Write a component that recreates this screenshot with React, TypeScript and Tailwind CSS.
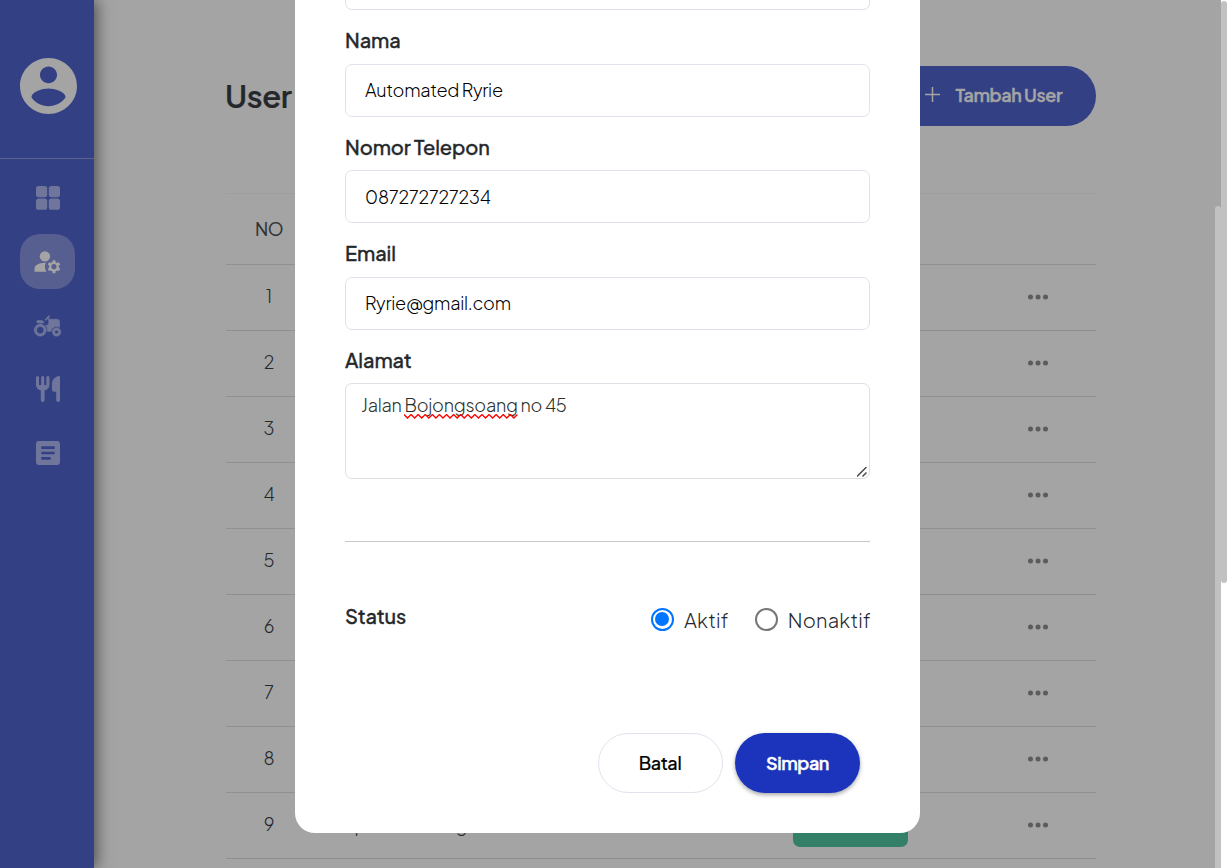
import { MdManageAccounts, MdAgriculture, MdArticle } from "react-icons/md";

const AccountIcon = () => (
  <svg width="57" height="56" viewBox="2 2 20 20" preserveAspectRatio="none" fill="currentColor">
    <path d="M12 2C6.480 2 2 6.480 2 12s4.480 10 10 10 10-4.480 10-10S17.520 2 12 2zm0 3c1.660 0 3 1.340 3 3s-1.340 3-3 3-3-1.340-3-3 1.340-3 3-3zm0 14.200c-2.500 0-4.710-1.280-6-3.220.030-1.990 4-3.080 6-3.080 1.990 0 5.970 1.090 6 3.080-1.290 1.940-3.500 3.220-6 3.220z" />
  </svg>
);

const GridIcon = () => (
  <svg width="24" height="24" viewBox="0 0 24 24" fill="currentColor">
    <rect x="0" y="0" width="11.2" height="11.2" rx="2.6" />
    <rect x="12.8" y="0" width="11.2" height="11.2" rx="2.6" />
    <rect x="0" y="12.6" width="11.2" height="11.2" rx="2.6" />
    <rect x="12.8" y="12.6" width="11.2" height="11.2" rx="2.6" />
  </svg>
);

const CutleryIcon = () => (
  <svg width="24" height="26" viewBox="0 0 24 26" fill="currentColor">
    <path d="M1.5 0A1.5 1.5 0 0 0 0 1.5v7.3c0 2.9 2 5 4.8 5.6v9.6a1.9 1.9 0 0 0 3.8 0v-9.6c2.8-.6 4.8-2.700 4.800-5.600V1.500a1.500 1.500 0 0 0-3 0V9H8.200V1.500a1.500 1.500 0 0 0-3 0V9H3V1.500A1.500 1.500 0 0 0 1.500 0Z" />
    <path d="M24 1.300v22.800a1.900 1.900 0 0 1-3.800 0v-8.300H18a2 2 0 0 1-2-2V8c0-3.800 2.500-6.800 6.500-7.900A1.250 1.250 0 0 1 24 1.300Z" />
  </svg>
);

const Dots = () => (
  <svg className="-translate-y-px" width="20" height="6" viewBox="0 0 20 6" fill="#5c5c5c">
    <circle cx="2.500" cy="3" r="2.500" />
    <circle cx="10" cy="3" r="2.500" />
    <circle cx="17.500" cy="3" r="2.500" />
  </svg>
);

const rows = [1, 2, 3, 4, 5, 6, 7, 8, 9];

function Sidebar() {
  return (
    <aside className="z-10 flex h-full w-[94px] shrink-0 flex-col bg-[#334084] text-[#70769b] shadow-[3px_0_14px_rgba(0,0,0,0.5)]">
      <div className="flex h-[159px] shrink-0 justify-center border-b border-[#5b6390] pt-[58.400px] pl-[3px] text-[#a4a4a4]">
        <AccountIcon />
      </div>
      <nav className="flex flex-col items-center">
        <span className="mt-[27px] flex h-6 items-center pl-px"><GridIcon /></span>
        <span className="mt-6 flex h-[55px] w-[55px] items-center justify-center rounded-[20px] bg-[#575f90] text-[#a4a4a4]">
          <MdManageAccounts size={31} />
        </span>
        <span className="mt-[22px] flex h-[29px] items-center pt-px pl-px [&_path[fill=none]]:hidden"><MdAgriculture size={29} stroke="currentColor" strokeWidth={0.5} strokeLinejoin="round" /></span>
        <span className="mt-[36px] flex h-[26px] items-center pl-px"><CutleryIcon /></span>
        <span className="mt-[35px] flex h-8 items-center pl-px"><MdArticle size={32} /></span>
      </nav>
    </aside>
  );
}

function Field({ label, value, tracking }: { label: string; value: string; tracking: string }) {
  return (
    <div className="mb-[17px] flex flex-col">
      <label className="mb-[9px] text-[20px] leading-[27.600px] font-medium tracking-[-0.1px] text-[#25282b] [-webkit-text-stroke:0.35px]"><span className="relative -top-px">{label}</span></label>
      <div className="flex h-[53px] items-center rounded-[7px] border border-[#e2e2ef] px-[19px] text-[18px] font-light text-black">
        <span className={tracking}>{value}</span>
      </div>
    </div>
  );
}

export default function App() {
  return (
    <div className="relative flex h-[868px] w-[1227px] overflow-hidden bg-[#a4a4a4] font-['Plus_Jakarta_Sans',Inter,sans-serif] text-[#25282b]">
      <Sidebar />
      <main className="flex w-[1121px] shrink-0 flex-col pl-[132px]">
        <header className="mt-[66px] flex h-[60px] w-[870px] items-center justify-between">
          <h1 className="-ml-px text-[31px] font-semibold tracking-[-0.4px] [-webkit-text-stroke:0.2px]">User</h1>
          <button className="flex h-[60px] w-[210px] items-center justify-end gap-[15px] rounded-[30px] bg-[#334084] pr-[34px] pb-[3px] text-[18px] font-semibold tracking-[-0.42px] text-[#a4a4a4]">
            <svg width="15" height="15" viewBox="0 0 15 15" stroke="currentColor" strokeWidth="1.500"><path d="M7.500 0v15M0 7.500h15" /></svg>
            <span className="[-webkit-text-stroke:0.4px]">Tambah User</span>
          </button>
        </header>
        <div className="mt-[67px] w-[870px] border-t border-[#9e9e9e]">
          <div className="flex h-[71px] items-center border-b border-[#909090] pb-px pl-[29px] text-[18px] tracking-[-0.4px] text-[#303234] [-webkit-text-stroke:0.15px]">NO</div>
          {rows.map((n) => (
            <div key={n} className="flex h-[66px] items-center border-b border-[#909090] text-[18px] font-light">
              <span className="w-[86px] -translate-y-[2px] text-center">{n}</span>
              <span className="w-[481px] -translate-y-px pl-[27px] tracking-[-0.1px]">{n === 9 ? "Siput Lembang" : ""}</span>
              <span className="flex w-[235px] -translate-y-px">{n === 9 && <span className="h-[45px] w-[115px] rounded-[7px] bg-[#337f68]" />}</span>
              <Dots />
            </div>
          ))}
        </div>
      </main>
      <div className="flex w-[6px] shrink-0 flex-col self-stretch pt-[206px]">
        <div className="h-full rounded-t-[3px] bg-[#c1c1c1]" />
      </div>
      <div className="h-full w-[6px] shrink-0 bg-white pt-px">
        <div className="h-[582px] rounded-[3px] bg-[#c1c1c1]" />
      </div>

      <div className="absolute inset-y-0 left-0 z-20 flex w-[1215px] items-start justify-center">
        <section className="flex h-[833px] w-[625px] flex-col rounded-b-[20px] bg-white px-[50px]">
          <div className="mb-[17px] h-[10px] shrink-0 rounded-b-[7px] border border-t-0 border-[#e2e2ef]" />
          <Field label="Nama" value="Automated Ryrie" tracking="-translate-y-px tracking-[-0.26px]" />
          <Field label="Nomor Telepon" value="087272727234" tracking="tracking-[-0.1px]" />
          <Field label="Email" value="Ryrie@gmail.com" tracking="-translate-y-px tracking-[-0.26px]" />
          <label className="mb-[9px] text-[20px] leading-[27px] font-medium tracking-[-0.1px] [-webkit-text-stroke:0.35px]"><span className="relative -top-px">Alamat</span></label>
          <div className="relative h-[96px] shrink-0 rounded-[7px] border border-[#dedee4] px-[15px] pt-[7px] text-[18px] leading-[27px] font-light tracking-[-0.24px] text-[#2b3028]">
            Jalan <span className="relative inline-block">Bojongsoang
              <svg className="absolute bottom-[-1px] left-0 h-[5px] w-full" viewBox="0 0 112 5" preserveAspectRatio="none" fill="none" stroke="#f00" strokeWidth="1.300">
                <path d={"M0 .5" + "l3.500 3.500l3.500-3.500".repeat(16)} />
              </svg>
            </span> no 45
            <svg className="absolute right-[2px] bottom-[1px]" width="10" height="10" viewBox="0 0 10 10" stroke="#444" strokeWidth="1.400"><path d="M0 9.500L9.500 0M5.500 9.500L9.500 5.500" /></svg>
          </div>
          <hr className="mt-[62px] border-[#c7c7c9]" />
          <div className="mt-[60px] flex h-[36px] items-start justify-between text-[20px]">
            <span className="-mt-px leading-[30px] font-medium tracking-[-0.1px] [-webkit-text-stroke:0.35px]">Status</span>
            <div className="-mr-px flex pt-[3px] leading-[30px] font-light tracking-[0.2px]">
              <label className="flex items-center gap-[10px]">
                <span className="-mt-px flex h-[23px] w-[23px] items-center justify-center rounded-full border-2 border-[#0075ff]"><span className="h-[14px] w-[14px] rounded-full bg-[#0075ff]" /></span>
                <span>Aktif</span>
              </label>
              <label className="ml-[26px] flex items-center gap-[10px]">
                <span className="-mt-px h-[23px] w-[23px] rounded-full border-2 border-[#767676]" />
                <span>Nonaktif</span>
              </label>
            </div>
          </div>
          <div className="mt-[95px] flex justify-end gap-3 pr-[10px] text-[18px]">
            <button className="h-[60px] w-[125px] rounded-[30px] border border-[#e2e2ef] pr-px font-medium tracking-[-0.3px] text-black [-webkit-text-stroke:0.2px]">Batal</button>
            <button className="h-[60px] w-[125px] rounded-[30px] bg-[#1c34bc] font-semibold tracking-[-0.45px] text-white shadow-[0_2px_4px_rgba(0,0,0,0.35)] [-webkit-text-stroke:0.35px]">Simpan</button>
          </div>
        </section>
      </div>
    </div>
  );
}
